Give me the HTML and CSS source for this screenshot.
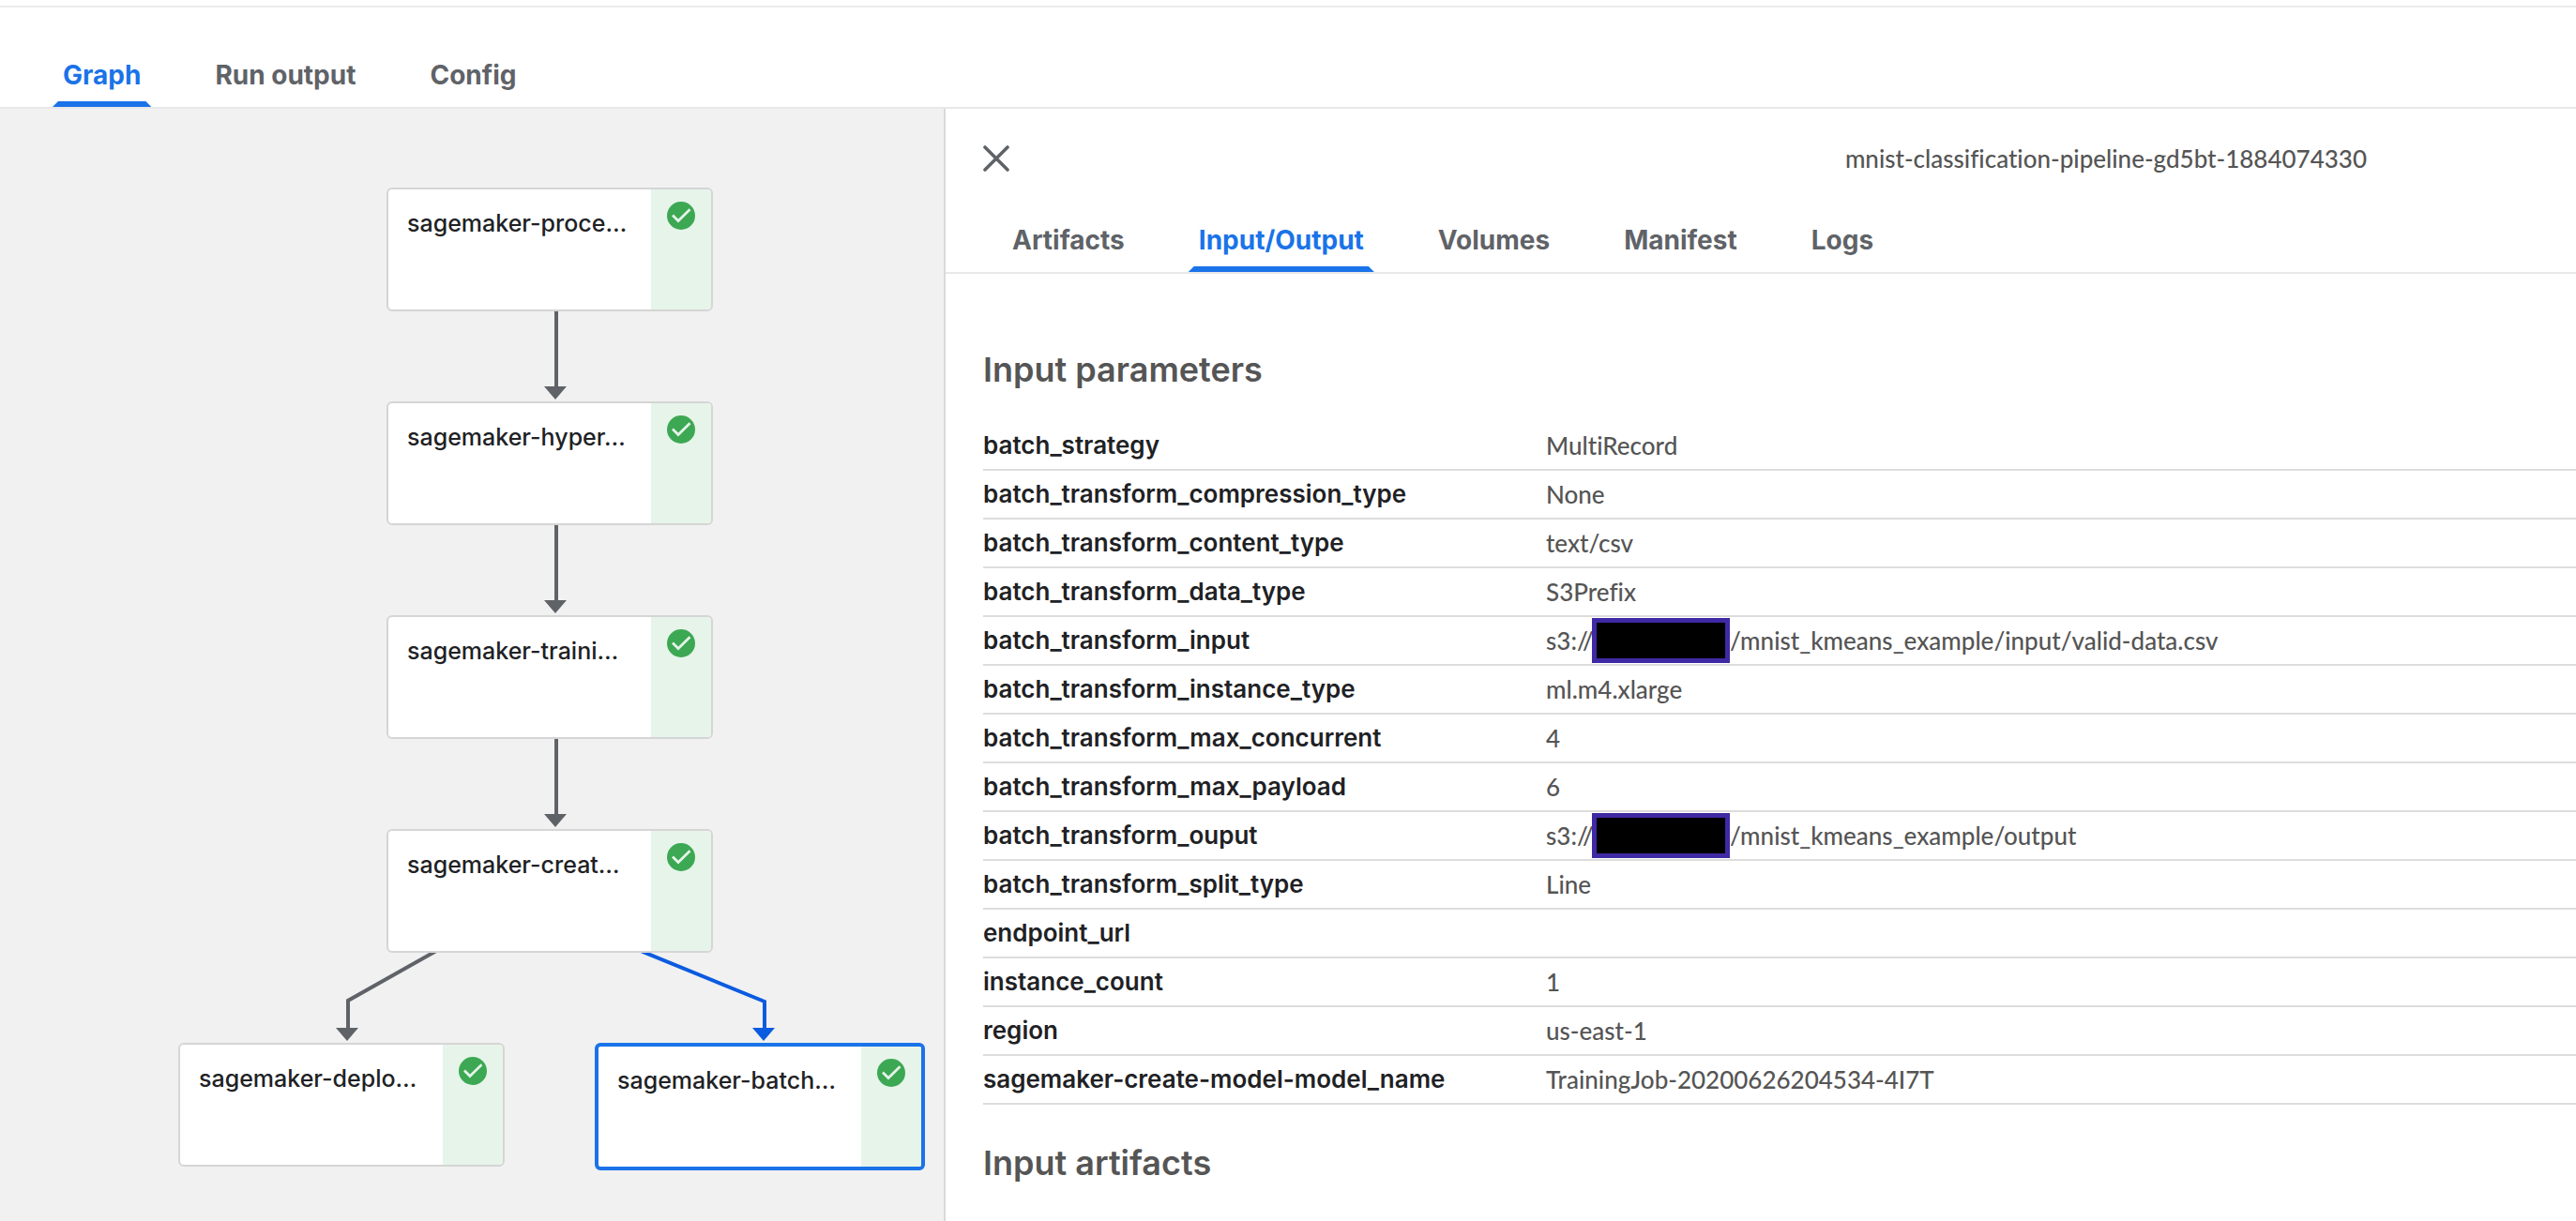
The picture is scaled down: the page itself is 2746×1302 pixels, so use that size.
FILE: index.html
```html
<!DOCTYPE html>
<html lang="en">
<head>
<meta charset="utf-8">
<title>Pipeline run</title>
<link rel="stylesheet" href="styles.css">
</head>
<body>
<svg class="sprite" aria-hidden="true">
  <symbol id="status-ok" viewBox="0 0 36 36">
    <circle cx="18" cy="18" r="15" fill="#3da853"/>
    <path d="M9 17.5 15 23.5 27.5 11.3" fill="none" stroke="#e6f4ea" stroke-width="2.7"/>
  </symbol>
</svg>

<header class="run-header">
  <nav class="tabs" role="tablist" aria-label="Run views">
    <button class="tab active" role="tab" aria-selected="true">Graph</button>
    <button class="tab" role="tab" aria-selected="false">Run output</button>
    <button class="tab" role="tab" aria-selected="false">Config</button>
  </nav>
</header>

<main class="run-page">
  <section class="graph" aria-label="Pipeline graph">
    <svg class="edges" aria-hidden="true">
      <g class="edge">
        <path d="M593 216V297M593 444V525M593 672V753"/>
        <path d="M465 898 371 951V981"/>
        <path class="arrow" d="M580 296h24l-12 14zM580 524h24l-12 14zM580 752h24l-12 14zM358 980h24l-12 14z"/>
      </g>
      <g class="edge edge-selected">
        <path d="M683 898 815 952V981"/>
        <path class="arrow" d="M802 980h24l-12 14z"/>
      </g>
    </svg>
    <div class="node node-process"><span class="node-name">sagemaker-proce…</span><span class="node-status"><svg><use href="#status-ok"/></svg></span></div>
    <div class="node node-hyper"><span class="node-name">sagemaker-hyper…</span><span class="node-status"><svg><use href="#status-ok"/></svg></span></div>
    <div class="node node-training"><span class="node-name">sagemaker-traini…</span><span class="node-status"><svg><use href="#status-ok"/></svg></span></div>
    <div class="node node-create"><span class="node-name">sagemaker-creat…</span><span class="node-status"><svg><use href="#status-ok"/></svg></span></div>
    <div class="node node-deploy"><span class="node-name">sagemaker-deplo…</span><span class="node-status"><svg><use href="#status-ok"/></svg></span></div>
    <div class="node node-batch selected"><span class="node-name">sagemaker-batch…</span><span class="node-status"><svg><use href="#status-ok"/></svg></span></div>
  </section>

  <aside class="side-panel">
    <div class="panel-header">
      <button class="close" aria-label="Close">
        <svg viewBox="0 0 28 28" width="28" height="28"><path d="M2 2 26 26M26 2 2 26"/></svg>
      </button>
      <span class="panel-title">mnist-classification-pipeline-gd5bt-1884074330</span>
    </div>
    <nav class="tabs panel-tabs" role="tablist" aria-label="Step details">
      <button class="tab" role="tab" aria-selected="false">Artifacts</button>
      <button class="tab active" role="tab" aria-selected="true">Input/Output</button>
      <button class="tab" role="tab" aria-selected="false">Volumes</button>
      <button class="tab" role="tab" aria-selected="false">Manifest</button>
      <button class="tab" role="tab" aria-selected="false">Logs</button>
    </nav>
    <div class="panel-body">
      <h2>Input parameters</h2>
      <table class="params">
        <tbody>
          <tr><th scope="row">batch_strategy</th><td>MultiRecord</td></tr>
          <tr><th scope="row">batch_transform_compression_type</th><td>None</td></tr>
          <tr><th scope="row">batch_transform_content_type</th><td>text/csv</td></tr>
          <tr><th scope="row">batch_transform_data_type</th><td>S3Prefix</td></tr>
          <tr><th scope="row">batch_transform_input</th><td><div class="uri"><span class="scheme">s3://</span><span class="redacted"></span><span>/mnist_kmeans_example/input/valid-data.csv</span></div></td></tr>
          <tr><th scope="row">batch_transform_instance_type</th><td>ml.m4.xlarge</td></tr>
          <tr><th scope="row">batch_transform_max_concurrent</th><td>4</td></tr>
          <tr><th scope="row">batch_transform_max_payload</th><td>6</td></tr>
          <tr><th scope="row">batch_transform_ouput</th><td><div class="uri"><span class="scheme">s3://</span><span class="redacted"></span><span>/mnist_kmeans_example/output</span></div></td></tr>
          <tr><th scope="row">batch_transform_split_type</th><td>Line</td></tr>
          <tr><th scope="row">endpoint_url</th><td></td></tr>
          <tr><th scope="row">instance_count</th><td>1</td></tr>
          <tr><th scope="row">region</th><td>us-east-1</td></tr>
          <tr><th scope="row">sagemaker-create-model-model_name</th><td>TrainingJob-20200626204534-4I7T</td></tr>
        </tbody>
      </table>
      <h2>Input artifacts</h2>
    </div>
  </aside>
</main>
</body>
</html>
```
FILE: styles.css
```css
* {
  box-sizing: border-box;
}

body {
  margin: 0;
  min-height: 100vh;
  display: flex;
  flex-direction: column;
  background: #fff;
  color: #555;
  font-family: Lato, "Open Sans", sans-serif;
  font-size: 26px;
  font-weight: 500;
  font-variant-ligatures: none;
  line-height: 32px;
}

button {
  border: 0;
  padding: 0;
  background: none;
  cursor: pointer;
}

.sprite {
  position: absolute;
  width: 0;
  height: 0;
}

/* Tabs */

.run-header {
  margin-top: 6px;
  padding-top: 38px;
  border-top: 2px solid #ebebeb;
}

.tabs {
  display: flex;
  gap: 57px;
  padding-left: 56px;
  border-bottom: 2px solid #e8e8e8;
}

.tab {
  position: relative;
  height: 68px;
  padding: 0 11px;
  color: #5f6368;
  font-family: Inter, sans-serif;
  font-size: 28px;
  font-weight: 700;
  white-space: nowrap;
}

.tab.active {
  color: #1a73e8;
}

.tab.active::after {
  content: "";
  position: absolute;
  left: 0;
  right: 0;
  bottom: 0;
  height: 6px;
  background: #1a73e8;
  clip-path: polygon(6px 0, calc(100% - 6px) 0, 100% 100%, 0 100%);
}

.run-page {
  flex: 1;
  display: grid;
  grid-template-columns: 503fr 870fr;
}

/* Graph */

.graph {
  position: relative;
  overflow: hidden;
  background: #f1f1f1;
}

.edges {
  position: absolute;
  inset: 0;
  width: 100%;
  height: 100%;
}

.edge {
  fill: none;
  stroke: #5f6368;
  stroke-width: 4;
}

.edge .arrow {
  fill: #5f6368;
  stroke: none;
}

.edge-selected {
  stroke: #0b5be0;
}

.edge-selected .arrow {
  fill: #0b5be0;
}

.node {
  position: absolute;
  display: flex;
  box-sizing: content-box;
  width: 344px;
  height: 128px;
  overflow: hidden;
  border: 2px solid #d5d5d5;
  border-radius: 6px;
  background: #fff;
}

.node.selected {
  border: 4px solid #1a73e8;
}

.node-process { left: 412px; top: 84px; }
.node-hyper { left: 412px; top: 312px; }
.node-training { left: 412px; top: 540px; }
.node-create { left: 412px; top: 768px; }
.node-deploy { left: 190px; top: 996px; }
.node-batch { left: 634px; top: 996px; }

.node-name {
  flex: 1;
  padding: 20px 0 0 20px;
  color: #202124;
  font-family: Inter, sans-serif;
  font-size: 25px;
  font-weight: 500;
  white-space: nowrap;
}

.node-status {
  width: 64px;
  padding: 10px 14px;
  background: #e6f4ea;
}

.node-status svg {
  display: block;
  width: 36px;
  height: 36px;
}

/* Side panel */

.side-panel {
  border-left: 2px solid #d9d9d9;
}

.panel-header {
  display: flex;
  align-items: center;
  justify-content: space-between;
  height: 106px;
  padding: 0 223px 0 40px;
}

.close {
  display: flex;
}

.close path {
  fill: none;
  stroke: #5f6368;
  stroke-width: 3.6;
  stroke-linecap: round;
}

.panel-tabs {
  padding-left: 60px;
}

.panel-body {
  padding: 80px 0 40px 40px;
}

h2 {
  margin: 0 0 34px;
  font-family: Inter, sans-serif;
  font-size: 36px;
  font-weight: 600;
  line-height: 44px;
}

.params {
  width: 100%;
  margin-bottom: 40px;
  border-spacing: 0;
}

.params th,
.params td {
  height: 52px;
  padding: 0;
  border-bottom: 2px solid #ddd;
  text-align: left;
}

.params th {
  width: 600px;
  color: #202124;
  font-family: Inter, sans-serif;
  font-weight: 600;
}

.uri {
  display: flex;
  align-items: center;
}

.scheme {
  width: 49px;
}

.redacted {
  width: 147px;
  height: 48px;
  border: 5px solid #4029a4;
  background: #000;
}
```
